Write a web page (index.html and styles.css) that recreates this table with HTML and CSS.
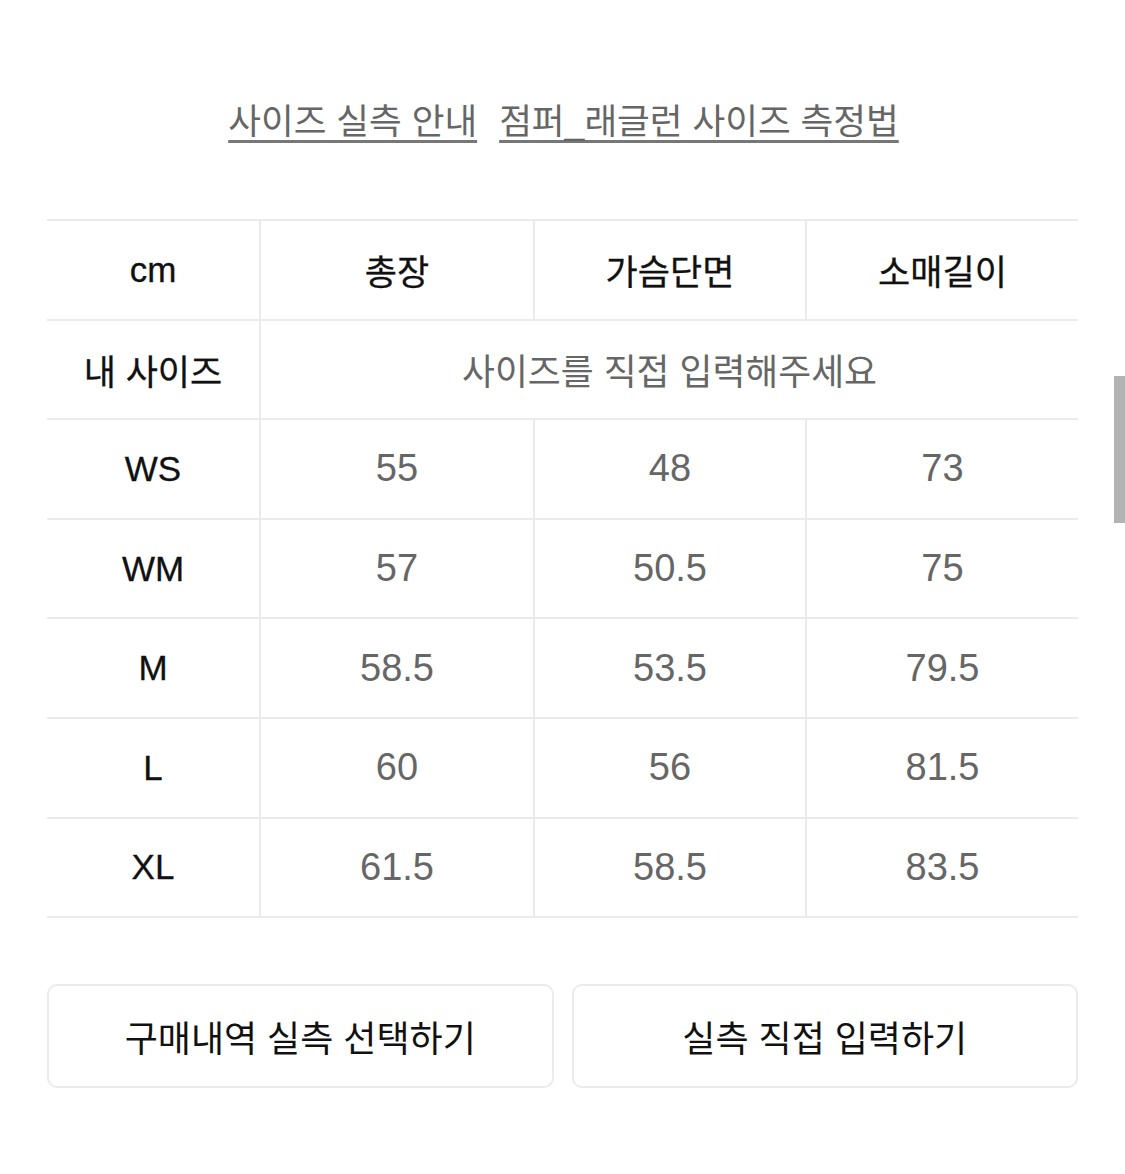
FILE: index.html
```html
<!DOCTYPE html>
<html lang="ko">
<head>
<meta charset="utf-8">
<title>사이즈</title>
<link rel="stylesheet" href="styles.css">
</head>
<body>
<div class="page">
  <nav class="links">
    <a class="link" href="#">사이즈 실측 안내</a>
    <a class="link" href="#">점퍼_래글런 사이즈 측정법</a>
  </nav>
  <table class="size-table">
    <colgroup>
      <col class="c0"><col class="c1"><col class="c2"><col class="c3">
    </colgroup>
    <tr class="head">
      <th>cm</th><th>총장</th><th>가슴단면</th><th>소매길이</th>
    </tr>
    <tr>
      <th>내 사이즈</th><td colspan="3" class="hint">사이즈를 직접 입력해주세요</td>
    </tr>
    <tr><th>WS</th><td>55</td><td>48</td><td>73</td></tr>
    <tr><th>WM</th><td>57</td><td>50.5</td><td>75</td></tr>
    <tr><th>M</th><td>58.5</td><td>53.5</td><td>79.5</td></tr>
    <tr><th>L</th><td>60</td><td>56</td><td>81.5</td></tr>
    <tr><th>XL</th><td>61.5</td><td>58.5</td><td>83.5</td></tr>
  </table>
  <div class="buttons">
    <button class="btn">구매내역 실측 선택하기</button>
    <button class="btn">실측 직접 입력하기</button>
  </div>
</div>
<div class="scrollbar"></div>
</body>
</html>
```
FILE: styles.css
```css
html, body {
  margin: 0;
  padding: 0;
  background: #fff;
}
body {
  font-family: "Liberation Sans", "Noto Sans CJK KR", sans-serif;
  color: #111;
  width: 1125px;
  height: 1174px;
  overflow: hidden;
  position: relative;
}
.page {
  padding: 96px 47px 0 47px;
}
.links {
  display: flex;
  justify-content: center;
  gap: 22px;
  height: 123px;
  box-sizing: border-box;
  padding-left: 2px;
}
.link {
  font-size: 35.6px;
  line-height: 52px;
  height: 52px;
  color: #666;
  text-decoration: underline;
  text-decoration-color: #777;
  text-decoration-thickness: 3px;
  text-underline-offset: 6px;
}
.size-table {
  width: 1031px;
  border-collapse: collapse;
  table-layout: fixed;
}
.c0 { width: 213px; }
.c1 { width: 274px; }
.c2 { width: 272px; }
.c3 { width: 272px; }
.size-table tr {
  height: 99.6px;
}
.size-table th,
.size-table td {
  border-top: 2px solid #ebebeb;
  border-bottom: 2px solid #ebebeb;
  border-left: 2px solid #ebebeb;
  text-align: center;
  vertical-align: middle;
  padding: 0;
  font-size: 35px;
}
.size-table tr > :first-child {
  border-left: none;
}
.size-table th {
  font-weight: normal;
  color: #111;
  -webkit-text-stroke: 0.3px #111;
}
.size-table td {
  color: #666;
  font-size: 38px;
}
.size-table .hint {
  font-size: 35.8px;
}
.buttons {
  display: flex;
  gap: 18px;
  margin-top: 66px;
}
.btn {
  flex: 1;
  height: 104px;
  background: #fff;
  border: 2px solid #ebebeb;
  border-radius: 10px;
  font-family: "Liberation Sans", "Noto Sans CJK KR", sans-serif;
  font-size: 36px;
  color: #111;
  padding: 0;
}
.scrollbar {
  position: absolute;
  right: 0;
  top: 376px;
  width: 11px;
  height: 147px;
  background: #b3b3b3;
}
```
